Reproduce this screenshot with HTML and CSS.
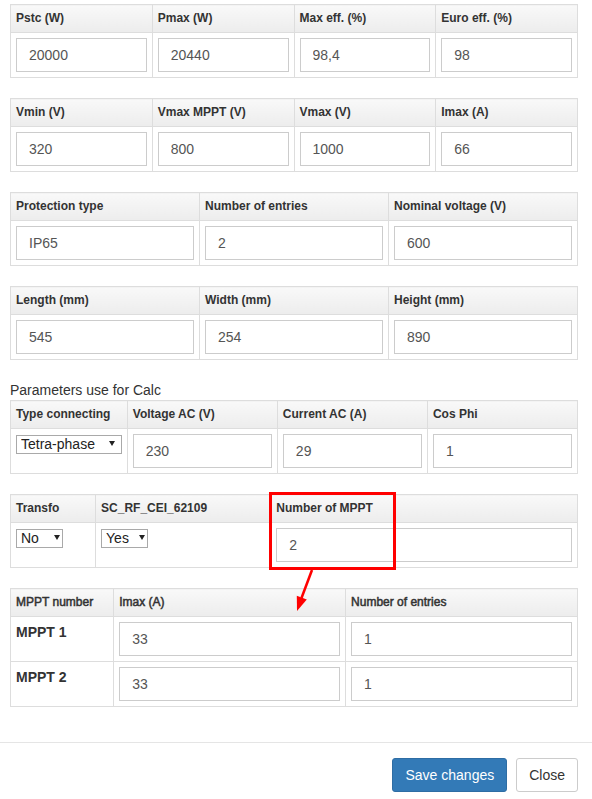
FILE: index.html
```html
<!DOCTYPE html>
<html>
<head>
<meta charset="utf-8">
<link rel="stylesheet" href="styles.css">
</head>
<body>
<div class="page">
  <div class="modal-body">
    <table class="grid">
      <thead><tr><th>Pstc (W)</th><th>Pmax (W)</th><th>Max eff. (%)</th><th>Euro eff. (%)</th></tr></thead>
      <tbody><tr>
        <td><input class="fc" value="20000"></td>
        <td><input class="fc" value="20440"></td>
        <td><input class="fc" value="98,4"></td>
        <td><input class="fc" value="98"></td>
      </tr></tbody>
    </table>

    <table class="grid">
      <thead><tr><th>Vmin (V)</th><th>Vmax MPPT (V)</th><th>Vmax (V)</th><th>Imax (A)</th></tr></thead>
      <tbody><tr>
        <td><input class="fc" value="320"></td>
        <td><input class="fc" value="800"></td>
        <td><input class="fc" value="1000"></td>
        <td><input class="fc" value="66"></td>
      </tr></tbody>
    </table>

    <table class="grid">
      <thead><tr><th>Protection type</th><th>Number of entries</th><th>Nominal voltage (V)</th></tr></thead>
      <tbody><tr>
        <td><input class="fc" value="IP65"></td>
        <td><input class="fc" value="2"></td>
        <td><input class="fc" value="600"></td>
      </tr></tbody>
    </table>

    <table class="grid">
      <thead><tr><th>Length (mm)</th><th>Width (mm)</th><th>Height (mm)</th></tr></thead>
      <tbody><tr>
        <td><input class="fc" value="545"></td>
        <td><input class="fc" value="254"></td>
        <td><input class="fc" value="890"></td>
      </tr></tbody>
    </table>

    <p class="label">Parameters use for Calc</p>
    <table class="grid">
      <colgroup><col class="c-type"><col class="c-ac"><col class="c-ac"><col class="c-ac"></colgroup>
      <thead><tr><th>Type connecting</th><th>Voltage AC (V)</th><th>Current AC (A)</th><th>Cos Phi</th></tr></thead>
      <tbody><tr>
        <td><span class="sel sel-wide"><select><option>Tetra-phase</option></select></span></td>
        <td><input class="fc" value="230"></td>
        <td><input class="fc" value="29"></td>
        <td><input class="fc" value="1"></td>
      </tr></tbody>
    </table>

    <table class="grid">
      <colgroup><col class="c-transfo"><col class="c-sc"><col class="c-nmppt"></colgroup>
      <thead><tr><th>Transfo</th><th>SC_RF_CEI_62109</th><th>Number of MPPT</th></tr></thead>
      <tbody><tr>
        <td><span class="sel sel-small"><select><option>No</option></select></span></td>
        <td><span class="sel sel-small"><select><option>Yes</option></select></span></td>
        <td><input class="fc" value="2"></td>
      </tr></tbody>
    </table>

    <table class="grid mppt">
      <colgroup><col class="c-mnum"><col class="c-mval"><col class="c-mval"></colgroup>
      <thead><tr><th>MPPT number</th><th>Imax (A)</th><th>Number of entries</th></tr></thead>
      <tbody>
        <tr>
          <th class="rowhead">MPPT 1</th>
          <td><input class="fc" value="33"></td>
          <td><input class="fc" value="1"></td>
        </tr>
        <tr>
          <th class="rowhead">MPPT 2</th>
          <td><input class="fc" value="33"></td>
          <td><input class="fc" value="1"></td>
        </tr>
      </tbody>
    </table>
  </div>

  <div class="modal-footer">
    <button class="btn btn-primary">Save changes</button>
    <button class="btn btn-default">Close</button>
  </div>

  <svg class="annot" width="592" height="799" viewBox="0 0 592 799">
    <rect x="270.5" y="493.5" width="124" height="75" fill="none" stroke="#ff0000" stroke-width="3"/>
    <line x1="312" y1="570" x2="301.5" y2="598" stroke="#ff0000" stroke-width="2.5"/>
    <polygon points="297,611 306.8,599.6 296.8,595.8" fill="#ff0000"/>
  </svg>
</div>
</body>
</html>
```

FILE: styles.css
```css
* { box-sizing: border-box; }

body {
  margin: 0;
  font-family: "Liberation Sans", Arial, sans-serif;
  font-size: 14px;
  line-height: 20px;
  color: #333;
  background: #fff;
}

.page {
  position: relative;
  width: 592px;
  height: 799px;
  overflow: hidden;
}

.modal-body {
  padding: 4px 14px 15px 10px;
}

table.grid {
  width: 100%;
  border-collapse: collapse;
  table-layout: fixed;
  margin-bottom: 20px;
}

.grid th,
.grid td {
  border: 1px solid #ddd;
  padding: 5px;
  text-align: left;
  vertical-align: top;
}

.grid thead th {
  font-size: 12px;
  line-height: 17px;
  font-weight: bold;
  color: #333;
  background: linear-gradient(to bottom, #f9f9f9, #ececec);
  white-space: nowrap;
  overflow: hidden;
}

.grid.mppt thead th {
  font-weight: normal;
  -webkit-text-stroke: 0.5px #333;
}

.grid .rowhead {
  font-size: 14px;
  line-height: 20px;
  font-weight: bold;
  background: #fff;
}

.c-type { width: 20.6%; }
.c-ac { width: 26.47%; }
.c-transfo { width: 15%; }
.c-sc { width: 30.9%; }
.c-nmppt { width: 54.1%; }
.c-mnum { width: 18.2%; }
.c-mval { width: 40.9%; }

.fc {
  display: block;
  width: 100%;
  height: 34px;
  padding: 6px 12px;
  font-family: "Liberation Sans", Arial, sans-serif;
  font-size: 14px;
  line-height: 20px;
  color: #555;
  background: #fff;
  border: 1px solid #ccc;
  border-radius: 0;
  outline: none;
}

.label {
  margin: 0;
  font-size: 14px;
  line-height: 20px;
  color: #333;
}

.sel {
  position: relative;
  display: inline-block;
  margin-top: 1px;
  vertical-align: top;
}

.sel select {
  display: block;
  -webkit-appearance: none;
  appearance: none;
  height: 19px;
  padding: 0 0 0 4px;
  border: 1px solid #a9a9a9;
  border-radius: 0;
  background: #fff;
  font-family: "Liberation Sans", Arial, sans-serif;
  font-size: 14px;
  line-height: 17px;
  color: #222;
  outline: none;
}

.sel-wide select { width: 106px; }
.sel-small select { width: 47px; }

.sel::after {
  content: "";
  position: absolute;
  top: 6px;
  right: 3px;
  width: 0;
  height: 0;
  border-left: 3px solid transparent;
  border-right: 3px solid transparent;
  border-top: 5px solid #222;
  pointer-events: none;
}

.sel-wide::after { right: 7px; }

.modal-footer {
  border-top: 1px solid #e5e5e5;
  padding: 15px 14px 15px 15px;
  display: flex;
  justify-content: flex-end;
  gap: 9px;
}

.btn {
  height: 34px;
  padding: 6px 12px;
  font-family: "Liberation Sans", Arial, sans-serif;
  font-size: 14px;
  line-height: 20px;
  border: 1px solid transparent;
  border-radius: 3px;
  cursor: pointer;
}

.btn-primary {
  color: #fff;
  background: #337ab7;
  border-color: #2e6da4;
}

.btn-default {
  color: #333;
  background: #fff;
  border-color: #ccc;
}

.annot {
  position: absolute;
  left: 0;
  top: 0;
  pointer-events: none;
}
```
